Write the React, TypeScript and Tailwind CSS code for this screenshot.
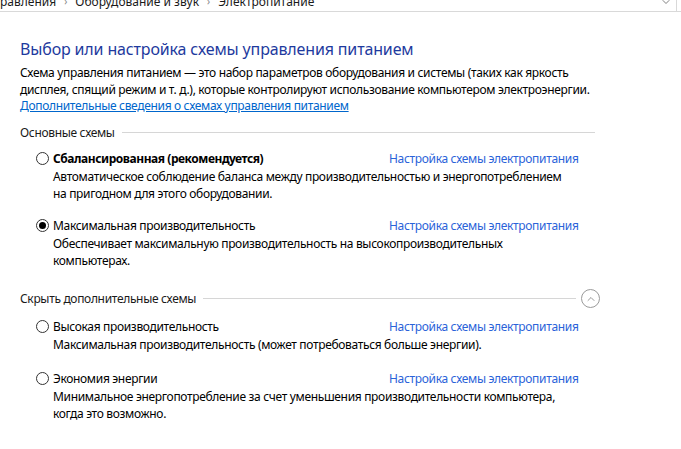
import { ChevronDown, ChevronUp } from 'lucide-react';

type Scheme = {
  name: string;
  desc: string[];
  checked?: boolean;
  bold?: boolean;
  gap: string;
};

const main: Scheme[] = [
  {
    name: 'Сбалансированная (рекомендуется)',
    desc: [
      'Автоматическое соблюдение баланса между производительностью и энергопотреблением',
      'на пригодном для этого оборудовании.',
    ],
    bold: true,
    gap: 'mt-[9px]',
  },
  {
    name: 'Максимальная производительность',
    desc: ['Обеспечивает максимальную производительность на высокопроизводительных', 'компьютерах.'],
    checked: true,
    gap: 'mt-[15px]',
  },
];

const extra: Scheme[] = [
  {
    name: 'Высокая производительность',
    desc: ['Максимальная производительность (может потребоваться больше энергии).'],
    gap: 'mt-[11px]',
  },
  {
    name: 'Экономия энергии',
    desc: ['Минимальное энергопотребление за счет уменьшения производительности компьютера,', 'когда это возможно.'],
    gap: 'mt-[17px]',
  },
];

function Radio({ checked }: { checked?: boolean }) {
  return (
    <span className="w-[13px] h-[13px] rounded-full border border-[#333] bg-white flex items-center justify-center shrink-0">
      {checked && <span className="w-[7px] h-[7px] rounded-full bg-[#000]" />}
    </span>
  );
}

function SchemeRow({ s }: { s: Scheme }) {
  return (
    <div className={`${s.gap} pl-[16px]`}>
      <div className="flex items-center h-[17px]">
        <div className="flex items-center gap-[4px] w-[353px]">
          <Radio checked={s.checked} />
          <span className={s.bold ? 'font-bold tracking-[-0.45px]' : ''}>{s.name}</span>
        </div>
        <span className="text-[#2b63d9]">Настройка схемы электропитания</span>
      </div>
      <div className="pl-[17px] mt-[1px]">
        {s.desc.map((d) => (
          <div key={d}>{d}</div>
        ))}
      </div>
    </div>
  );
}

export default function App() {
  return (
    <div className="w-[681px] h-[449px] bg-white overflow-hidden text-[12px] leading-[17px] tracking-[-0.33px] text-black font-['Noto_Sans','Open_Sans',sans-serif]">
      {/* адресная строка */}
      <div className="h-[12px] border-b border-[#d9d9d9] flex overflow-hidden">
        <div className="flex-1 overflow-hidden">
          <div className="-mt-[9px] h-[20px] flex items-center gap-[8px] tracking-normal text-[#1a1a1a] whitespace-nowrap">
            <span>равления</span>
            <span className="text-[#888] text-[10px]">›</span>
            <span>Оборудование и звук</span>
            <span className="text-[#888] text-[10px]">›</span>
            <span>Электропитание</span>
          </div>
        </div>
        <div className="w-[20px] flex items-start justify-center -mt-[4px]">
          <ChevronDown size={12} strokeWidth={1.5} className="text-[#555]" />
        </div>
        <div className="w-[5px] border-l border-[#d9d9d9]" />
      </div>

      <div className="pl-[20px]">
        <h1 className="mt-[26px] text-[16px] leading-[22px] tracking-[-0.15px] text-[#1e3a9e]">
          Выбор или настройка схемы управления питанием
        </h1>
        <p className="mt-[4px]">
          Схема управления питанием — это набор параметров оборудования и системы (таких как яркость
          <br />
          дисплея, спящий режим и т. д.), которые контролируют использование компьютером электроэнергии.
        </p>
        <div className="leading-[15px]">
          <span className="text-[#0066cc] underline">Дополнительные сведения о схемах управления питанием</span>
        </div>

        <div className="mt-[11px] w-[575px] flex items-center gap-[7px] text-[#1a1a1a]">
          <span>Основные схемы</span>
          <div className="flex-1 h-px bg-[#d6d6d6]" />
        </div>
        {main.map((s) => (
          <SchemeRow key={s.name} s={s} />
        ))}

        <div className="mt-[21px] w-[580px] h-[17px] flex items-center gap-[7px] text-[#1a1a1a]">
          <span>Скрыть дополнительные схемы</span>
          <div className="flex-1 h-px bg-[#d6d6d6]" />
          <span className="w-[19px] h-[19px] rounded-full border border-[#9a9a9a] flex items-center justify-center -ml-[2px]">
            <ChevronUp size={12} strokeWidth={1.5} className="text-[#777]" />
          </span>
        </div>
        {extra.map((s) => (
          <SchemeRow key={s.name} s={s} />
        ))}
      </div>
    </div>
  );
}
